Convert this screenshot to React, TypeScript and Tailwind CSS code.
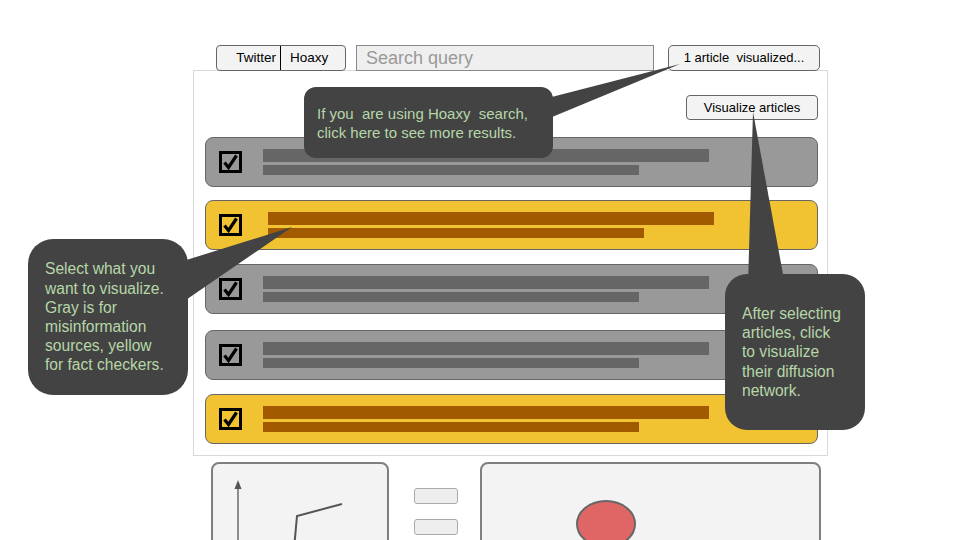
import React from "react";

const Check = () => (
  <div className="w-[23px] h-[22px] border-[3px] border-black flex items-center justify-center shrink-0">
    <svg width="17" height="16" viewBox="0 0 17 16">
      <path d="M2.5 8.5 L6.5 13.5 L14.5 1.5" fill="none" stroke="black" strokeWidth="3.2" strokeLinejoin="miter" />
    </svg>
  </div>
);

type RowProps = { yellow?: boolean; offset?: number; mt?: string };

const Row = ({ yellow, offset = 44, mt = "" }: RowProps) => {
  const bg = yellow ? "bg-[#f1c232]" : "bg-[#999999]";
  const bar = yellow ? "bg-[#a25a00]" : "bg-[#666666]";
  return (
    <div className={`h-[50px] rounded-[8px] border border-[#666] ${bg} flex items-center pl-[13px] ${mt}`}>
      <Check />
      <div className="flex flex-col" style={{ marginLeft: offset - 23 }}>
        <div className={`w-[446px] h-[13px] ${bar}`} />
        <div className={`w-[376px] h-[10px] mt-[3px] ${bar}`} />
      </div>
    </div>
  );
};

export default function App() {
  return (
    <div
      className="relative w-[960px] h-[540px] overflow-hidden bg-white text-black"
      style={{ fontFamily: '"Liberation Sans", Arial, sans-serif' }}
    >
      {/* top row */}
      <div className="flex pt-[45px] pl-[216px]">
        <div className="flex w-[130px] h-[26px] border border-[#666] rounded-[4px] bg-[#f3f3f3] text-[13.5px]">
          <div className="w-[64px] border-r border-black flex items-center justify-end pr-[4px]">Twitter</div>
          <div className="flex-1 flex items-center pl-[9px]">Hoaxy</div>
        </div>
        <div className="ml-[10px] w-[298px] h-[26px] border border-[#888] bg-[#efefef] text-[18px] text-[#999] pl-[9px] flex items-center">
          Search query
        </div>
        <div className="ml-[14px] w-[152px] h-[26px] border border-[#666] rounded-[5px] bg-[#f3f3f3] text-[13px] flex items-center justify-center">
          1 article&nbsp; visualized...
        </div>
      </div>

      {/* main panel */}
      <div className="ml-[193px] mt-[-1px] w-[635px] h-[386px] border border-[#d9d9d9] flex flex-col">
        <div className="self-end mr-[9px] mt-[24px] w-[132px] h-[25px] border border-[#666] rounded-[4px] bg-[#f3f3f3] text-[13px] flex items-center justify-center">
          Visualize articles
        </div>
        <div className="ml-[11px] mt-[17px] w-[613px] flex flex-col">
          <Row />
          <Row yellow offset={49} mt="mt-[13px]" />
          <Row mt="mt-[14px]" />
          <Row mt="mt-[16px]" />
          <Row yellow mt="mt-[14px]" />
        </div>
      </div>

      {/* bottom */}
      <div className="flex pl-[211px] mt-[6px]">
        <div className="relative w-[178px] h-[100px] border-2 border-[#7f7f7f] rounded-[8px] bg-[#f3f3f3]">
          <svg className="absolute inset-0" width="174" height="96" viewBox="0 0 174 96">
            <line x1="25" y1="22" x2="25" y2="96" stroke="#555" strokeWidth="1.3" />
            <polygon points="25,16 21.5,25 28.5,25" fill="#555" />
            <polyline points="80,96 84,52 129,40" fill="none" stroke="#555" strokeWidth="2" />
          </svg>
        </div>
        <div className="ml-[25px] w-[44px] flex flex-col pt-[26px] gap-[15px]">
          <div className="h-[16px] rounded-[3px] border border-[#aaa] bg-[#eeeeee]" />
          <div className="h-[16px] rounded-[3px] border border-[#aaa] bg-[#eeeeee]" />
        </div>
        <div className="relative ml-[22px] w-[341px] h-[100px] border-2 border-[#7f7f7f] rounded-[8px] bg-[#f3f3f3]">
          <svg className="absolute inset-0" width="337" height="96" viewBox="0 0 337 96">
            <ellipse cx="124" cy="60" rx="29" ry="23" fill="#e06666" stroke="#666" strokeWidth="2" />
          </svg>
        </div>
      </div>

      {/* callout pointers */}
      <svg className="absolute inset-0 pointer-events-none" width="960" height="540" viewBox="0 0 960 540">
        <polygon points="540,100 540,122 680,64" fill="#434343" />
        <polygon points="180,262 180,304 292,227" fill="#434343" />
        <polygon points="753,112 748,285 785,285" fill="#434343" />
      </svg>

      {/* callouts */}
      <div className="absolute left-[304px] top-[87px] w-[249px] h-[71px] rounded-[12px] bg-[#434343] text-[#b6d7a8] text-[15px] leading-[19px] pl-[13px] flex items-center">
        <div>
          If you&nbsp; are using Hoaxy&nbsp; search,
          <br />
          click here to see more results.
        </div>
      </div>
      <div className="absolute left-[28px] top-[239px] w-[160px] h-[156px] rounded-[25px] bg-[#434343] text-[#b6d7a8] text-[15.6px] leading-[19.2px] pl-[17px] flex items-center">
        <div>
          Select what you
          <br />
          want to visualize.
          <br />
          Gray is for
          <br />
          misinformation
          <br />
          sources, yellow
          <br />
          for fact checkers.
        </div>
      </div>
      <div className="absolute left-[725px] top-[274px] w-[140px] h-[156px] rounded-[22px] bg-[#434343] text-[#b6d7a8] text-[15.6px] leading-[19.2px] pl-[17px] flex items-center">
        <div>
          After selecting
          <br />
          articles, click
          <br />
          to visualize
          <br />
          their diffusion
          <br />
          network.
        </div>
      </div>
    </div>
  );
}
